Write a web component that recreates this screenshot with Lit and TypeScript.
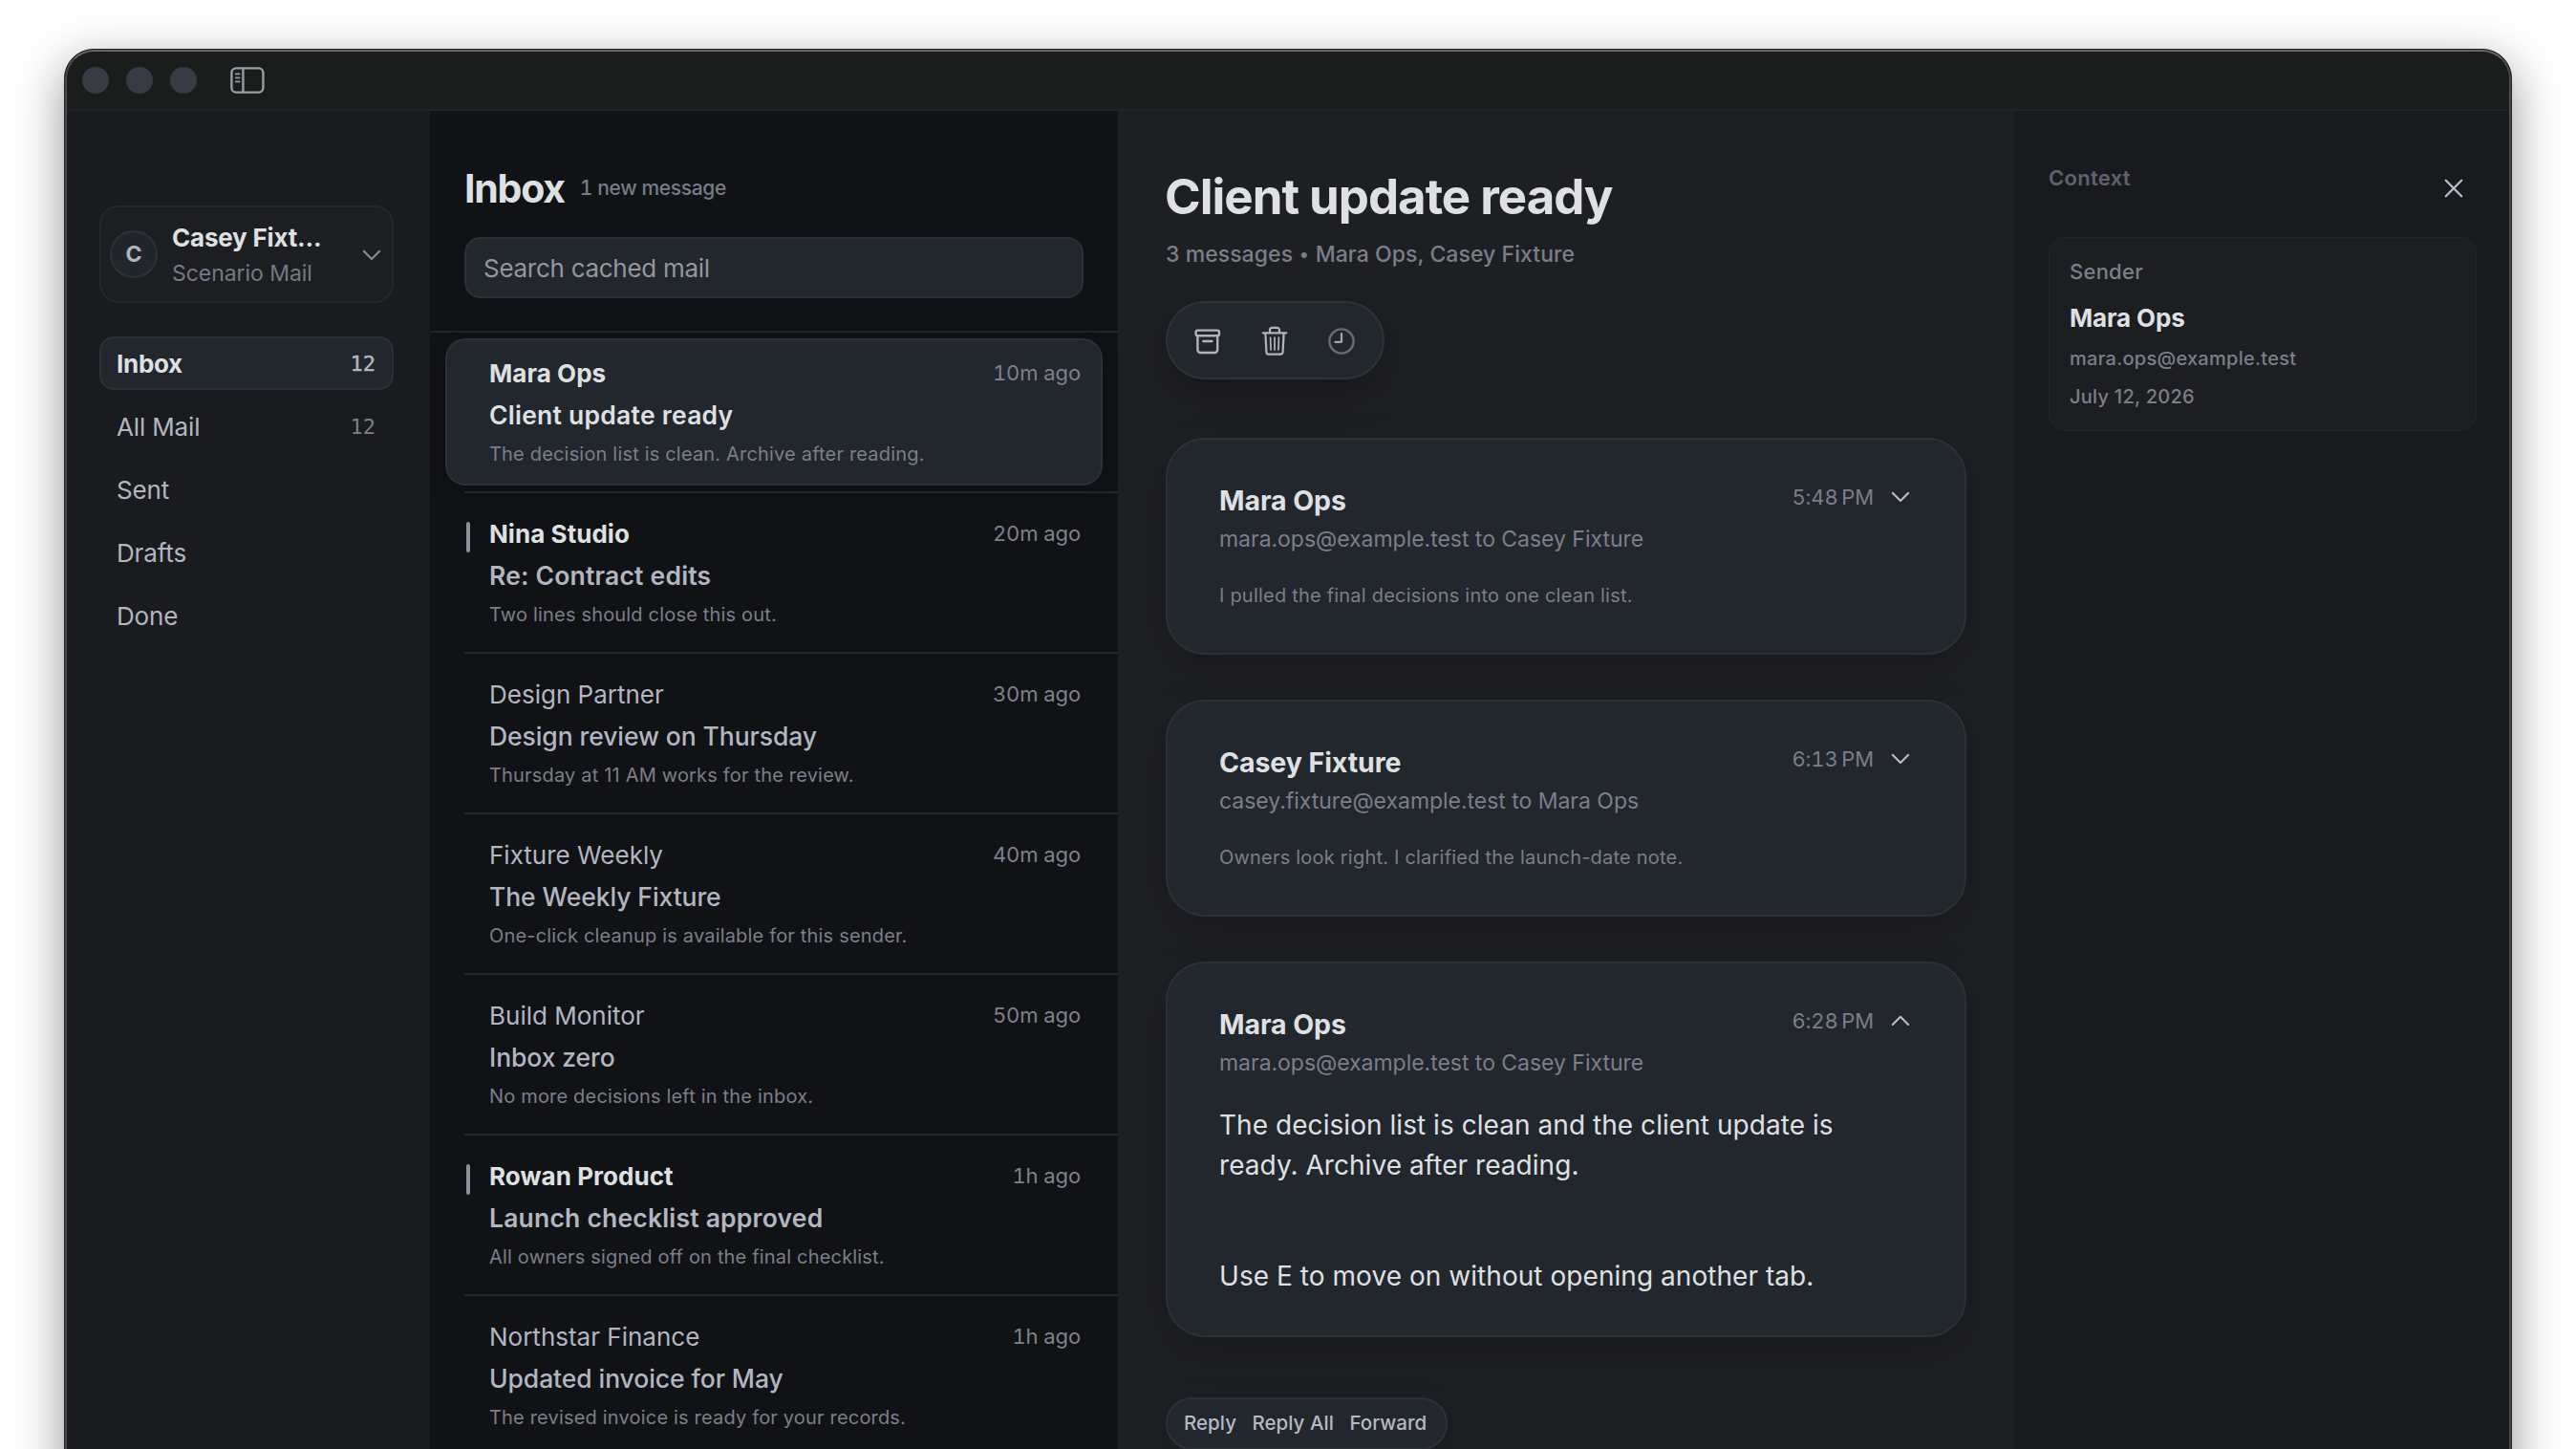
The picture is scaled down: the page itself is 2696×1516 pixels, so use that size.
import { LitElement, html, css, nothing } from "lit";
import { customElement, property } from "lit/decorators.js";
import { classMap } from "lit/directives/class-map.js";

interface Folder { name: string; count?: number; active?: boolean }
interface Mail { from: string; time: string; subject: string; snippet: string; state: "selected" | "unread" | "read" }
interface Message { from: string; route: string; time: string; preview?: string; body?: string[] }

const FOLDERS: Folder[] = [
  { name: "Inbox", count: 12, active: true },
  { name: "All Mail", count: 12 },
  { name: "Sent" },
  { name: "Drafts" },
  { name: "Done" },
];

const MAILS: Mail[] = [
  { from: "Mara Ops", time: "10m ago", subject: "Client update ready", snippet: "The decision list is clean. Archive after reading.", state: "selected" },
  { from: "Nina Studio", time: "20m ago", subject: "Re: Contract edits", snippet: "Two lines should close this out.", state: "unread" },
  { from: "Design Partner", time: "30m ago", subject: "Design review on Thursday", snippet: "Thursday at 11 AM works for the review.", state: "read" },
  { from: "Fixture Weekly", time: "40m ago", subject: "The Weekly Fixture", snippet: "One-click cleanup is available for this sender.", state: "read" },
  { from: "Build Monitor", time: "50m ago", subject: "Inbox zero", snippet: "No more decisions left in the inbox.", state: "read" },
  { from: "Rowan Product", time: "1h ago", subject: "Launch checklist approved", snippet: "All owners signed off on the final checklist.", state: "unread" },
  { from: "Northstar Finance", time: "1h ago", subject: "Updated invoice for May", snippet: "The revised invoice is ready for your records.", state: "read" },
];

const MESSAGES: Message[] = [
  { from: "Mara Ops", route: "mara.ops@example.test to Casey Fixture", time: "5:48\u202fPM", preview: "I pulled the final decisions into one clean list." },
  { from: "Casey Fixture", route: "casey.fixture@example.test to Mara Ops", time: "6:13\u202fPM", preview: "Owners look right. I clarified the launch-date note." },
  {
    from: "Mara Ops", route: "mara.ops@example.test to Casey Fixture", time: "6:28\u202fPM",
    body: ["The decision list is clean and the client update is ready. Archive after reading.", "Use E to move on without opening another tab."],
  },
];

const base = css`
  * { box-sizing: border-box; }
  :host {
    font-family: Inter, "Liberation Sans", sans-serif;
    color: #dfe0e2;
    white-space: nowrap;
  }
  svg { display: block; flex: none; fill: none; stroke: currentColor; stroke-linecap: round; stroke-linejoin: round; }
`;

const chevron = (up = false) => html`
  <svg width="20" height="12" viewBox="0 0 20 12" stroke-width="2.1">
    <path d=${up ? "M1.8 10 10 1.8 18.2 10" : "M1.8 1.8 10 10 18.2 1.8"} />
  </svg>`;

@customElement("mail-sidebar")
export class MailSidebar extends LitElement {
  static styles = [base, css`
    :host { display: flex; flex-direction: column; background: #1a1b1f; padding: 99px 38px 0 34px; }
    .account {
      display: flex; align-items: center; height: 102px; padding: 0 11px 0 9px;
      background: #1d1e22; border: 2px solid #22282b; border-radius: 20px; margin-bottom: 35px;
    }
    .avatar {
      width: 50px; height: 50px; border-radius: 50%; background: #21262d; border: 2px solid #2c3337;
      display: flex; align-items: center; justify-content: center;
      font-size: 23px; font-weight: 650; color: #b1b3be;
    }
    .who { flex: 1; padding: 3px 0 0 15px; }
    .name { font-size: 26px; font-weight: 650; line-height: 36px; letter-spacing: -0.2px; }
    .org { font-size: 23px; line-height: 38px; color: #747984; letter-spacing: -0.05px; }
    .caret { color: #878b95; margin-top: 2px; }
    .nav { display: flex; flex-direction: column; gap: 10px; }
    .item {
      display: flex; justify-content: space-between; align-items: center; height: 56px;
      padding: 0 17px 0 16px; border: 2px solid transparent; border-radius: 15px;
      font-size: 26px; color: #b3b6c0; letter-spacing: -0.15px;
    }
    .active { background: #22262d; border-color: #2a3237; color: #dfe0e2; font-weight: 650; letter-spacing: -0.3px; }
    .count { font: 22px "DejaVu Sans Mono", monospace; color: #7b7f89; letter-spacing: 0; }
    .active .count { color: #b3b6c0; -webkit-text-stroke: 0.4px #b3b6c0; }
  `];
  render() {
    return html`
      <div class="account">
        <div class="avatar">C</div>
        <div class="who"><div class="name">Casey Fixt...</div><div class="org">Scenario Mail</div></div>
        <div class="caret">${chevron()}</div>
      </div>
      <div class="nav">
        ${FOLDERS.map(f => html`
          <div class=${classMap({ item: true, active: !!f.active })}>
            <span>${f.name}</span>${f.count ? html`<span class="count">${f.count}</span>` : nothing}
          </div>`)}
      </div>`;
  }
}

@customElement("mail-list")
export class MailList extends LitElement {
  static styles = [base, css`
    :host { display: flex; flex-direction: column; background: #111216; overflow: hidden; }
    .head { height: 232px; flex: none; padding: 56px 36px 0; border-bottom: 2px solid #1f252a; }
    .title { display: flex; align-items: center; gap: 17px; height: 50px; margin-bottom: 26px; }
    .h { font-size: 41px; font-weight: 680; letter-spacing: -1.25px; line-height: 50px; }
    .new { font-size: 21px; font-weight: 550; color: #757c86; letter-spacing: -0.36px; line-height: 26px; font-variant-numeric: tabular-nums; margin-left: -1px; }
    .search {
      height: 64px; display: flex; align-items: center; padding-left: 18px;
      background: #22262d; border: 2px solid #2a3137; border-radius: 17px;
      font-size: 26px; color: #94979c; letter-spacing: -0.28px;
    }
    .row { flex: none; }
    .inner {
      display: grid; grid-template-columns: 44px 1fr; height: 154px; margin: 6px 16px;
      border: 2px solid transparent; border-radius: 21px;
    }
    .rule { height: 2px; margin-left: 36px; background: #20262b; }
    .bar { width: 4px; height: 32px; margin: 22px 0 0 20px; border-radius: 2px; background: transparent; }
    .text { padding: 13px 21px 0 0; }
    .top { display: flex; justify-content: space-between; height: 43px; }
    .from { font-size: 26px; line-height: 44px; color: #b3b6c0; }
    .time { font-size: 22px; line-height: 42px; color: #7d818b; font-variant-numeric: tabular-nums; letter-spacing: -0.1px; }
    .subject { font-size: 26.5px; line-height: 44px; font-weight: 500; color: #b3b6c0; letter-spacing: -0.08px; }
    .snippet { font-size: 20px; line-height: 39px; color: #7b7f89; letter-spacing: 0.18px; }
    .unread .bar { background: #8d909b; }
    .unread .from, .selected .from { font-weight: 650; color: #dfe0e2; letter-spacing: 0.05px; }
    .unread .subject { font-weight: 600; letter-spacing: 0.2px; }
    .selected .subject { font-weight: 600; color: #dfe0e2; letter-spacing: 0.25px; }
    .selected .inner { background: #22262d; border-color: #2a3137; box-shadow: 0 8px 20px rgba(0, 0, 0, 0.15); }
  `];
  render() {
    return html`
      <div class="head">
        <div class="title"><span class="h">Inbox</span><span class="new">1 new message</span></div>
        <div class="search">Search cached mail</div>
      </div>
      ${MAILS.map(m => html`
        <div class="row ${m.state}">
          <div class="inner">
            <div class="bar"></div>
            <div class="text">
              <div class="top"><span class="from">${m.from}</span><span class="time">${m.time}</span></div>
              <div class="subject">${m.subject}</div>
              <div class="snippet">${m.snippet}</div>
            </div>
          </div>
          <div class="rule"></div>
        </div>`)}`;
  }
}

@customElement("message-card")
export class MessageCard extends LitElement {
  @property({ attribute: false }) message!: Message;
  static styles = [base, css`
    :host {
      display: block; height: 227px; padding: 43.5px 57px 0 54px; background: #22262d;
      border: 2px solid #2a3137; border-radius: 41px; box-shadow: 0 14px 40px rgba(0, 0, 0, 0.18);
    }
    :host([open]) { height: 393px; }
    .top { display: flex; justify-content: space-between; height: 40px; }
    .from { font-size: 28.5px; font-weight: 650; line-height: 40px; letter-spacing: -0.08px; }
    .meta { display: flex; align-items: center; gap: 18px; height: 32px; font-size: 22px; color: #7b7e88; font-variant-numeric: tabular-nums; letter-spacing: -0.15px; }
    .meta svg { color: #b9bcc6; }
    .route { font-size: 23px; line-height: 41px; color: #7b7f89; letter-spacing: -0.03px; }
    .preview { font-size: 20px; line-height: 38px; margin-top: 19px; color: #7b7f89; letter-spacing: 0.21px; }
    .body { font-size: 28px; line-height: 42px; letter-spacing: 0.05px; margin-top: 23px; width: 680px; white-space: normal; }
    .para + .para { margin-top: 74px; }
  `];
  render() {
    const m = this.message;
    return html`
      <div class="top">
        <span class="from">${m.from}</span>
        <span class="meta"><span>${m.time}</span>${chevron(!!m.body)}</span>
      </div>
      <div class="route">${m.route}</div>
      ${m.preview ? html`<div class="preview">${m.preview}</div>` : nothing}
      ${m.body ? html`<div class="body">${m.body.map(p => html`<div class="para">${p}</div>`)}</div>` : nothing}`;
  }
}

@customElement("mail-reader")
export class MailReader extends LitElement {
  static styles = [base, css`
    :host { display: flex; flex-direction: column; background: #1e1f23; padding: 60px 50px 0; overflow: hidden; }
    .title { flex: none; font-size: 51px; font-weight: 680; line-height: 60px; letter-spacing: -1.02px; margin-left: -1px; }
    .sub { flex: none; font-size: 23px; font-weight: 500; line-height: 30px; margin-top: 15px; color: #7a7e88; letter-spacing: 0.06px; }
    .dot { font-size: 19px; margin: 0 0.5px; vertical-align: 1px; line-height: 1; }
    .tools {
      flex: none; align-self: flex-start; display: flex; align-items: center; gap: 42px; margin-top: 34px;
      width: 229px; height: 82px; padding: 2px 28px 0; background: #22262d; border: 2px solid #2d3439;
      border-radius: 41px; color: #b1b4bf; box-shadow: 0 14px 40px rgba(0, 0, 0, 0.22);
    }
    .later { color: #696c75; }
    .hands { color: #a3a6b0; stroke: #a3a6b0; }
    .cards { flex: none; display: flex; flex-direction: column; gap: 47px; margin-top: 61px; }
    .reply {
      flex: none; align-self: flex-start; display: flex; align-items: center; gap: 16.5px; height: 55px;
      margin-top: 63px; padding: 0 19.5px 2px 17px; background: #22262d; border: 2px solid #2c3338; border-radius: 28px;
      font-size: 20.5px; font-weight: 550; color: #b6b9c2; letter-spacing: 0.03px;
      box-shadow: 0 14px 40px rgba(0, 0, 0, 0.12);
    }
  `];
  render() {
    return html`
      <div class="title">Client update ready</div>
      <div class="sub">3 messages <span class="dot">•</span> Mara Ops, Casey Fixture</div>
      <div class="tools">
        <svg width="28" height="28" viewBox="0 0 28 28" stroke-width="2.4">
          <rect x="1.6" y="2.6" width="24.4" height="5.6" rx="1.8" />
          <path d="M3.4 8.4V23a3 3 0 0 0 3 3h14.8a3 3 0 0 0 3-3V8.4M9.4 14h9" />
        </svg>
        <svg width="28" height="32" viewBox="0 0 28 32" stroke-width="2.2">
          <path d="M1.8 7.4h24.4M9 7V4.2A2.4 2.4 0 0 1 11.4 1.8h5.2A2.4 2.4 0 0 1 19 4.2V7M4.4 7.6l1 19.6A2.4 2.4 0 0 0 7.8 29.6h12.4a2.4 2.4 0 0 0 2.4-2.4l1-19.6" />
          <path stroke-width="1.7" d="M9.6 12l.4 13M14 12v13M18.4 12 18 25" />
        </svg>
        <svg class="later" width="28" height="28" viewBox="0 0 28 28" stroke-width="2.4">
          <circle cx="14" cy="14" r="12.6" />
          <path class="hands" stroke-width="2.2" d="M14 6v8.8H7.4" />
        </svg>
      </div>
      <div class="cards">
        ${MESSAGES.map(m => html`<message-card .message=${m} ?open=${!!m.body}></message-card>`)}
      </div>
      <div class="reply"><span>Reply</span><span>Reply All</span><span>Forward</span></div>`;
  }
}

@customElement("mail-context")
export class MailContext extends LitElement {
  static styles = [base, css`
    :host { display: flex; flex-direction: column; background: #191a1e; padding: 56px 34px 0 36px; }
    .head { display: flex; justify-content: space-between; height: 76px; }
    .label { font-size: 22px; font-weight: 600; line-height: 28px; color: #60636b; letter-spacing: 0.3px; }
    .close { color: #b9bcc6; padding: 15px 14px 0 0; }
    .card { height: 203px; padding: 17px 21px; background: #1d1e22; border: 1px solid #222529; border-radius: 17px; }
    .sender { font-size: 22px; font-weight: 550; line-height: 36px; color: #7b7f89; letter-spacing: 0.25px; }
    .name { font-size: 26px; font-weight: 650; line-height: 44px; margin-top: 9px; letter-spacing: -0.15px; }
    .line { font-size: 20px; font-weight: 500; line-height: 40px; color: #7b7f89; letter-spacing: 0.26px; }
  `];
  render() {
    return html`
      <div class="head">
        <span class="label">Context</span>
        <span class="close"><svg width="20" height="20" viewBox="0 0 20 20" stroke-width="2.3"><path d="M1.8 1.8 18.2 18.2M18.2 1.8 1.8 18.2" /></svg></span>
      </div>
      <div class="card">
        <div class="sender">Sender</div>
        <div class="name">Mara Ops</div>
        <div class="line">mara.ops@example.test</div>
        <div class="line">July 12, 2026</div>
      </div>`;
  }
}

@customElement("app-root")
export class AppRoot extends LitElement {
  static styles = [base, css`
    :host { display: block; width: 2696px; height: 1516px; padding: 51px 67px 0; background: #fefefe; overflow: hidden; box-sizing: border-box; }
    .frame {
      height: 1600px; border: 1px solid #1b1d20; border-radius: 31px; overflow: hidden;
      box-shadow: 0 16px 50px rgba(0, 0, 0, 0.42); background: #1b1c1c;
    }
    .window {
      height: 100%; display: flex; flex-direction: column; border: 2px solid #484b52;
      border-top-color: #63666b; border-radius: 30px; overflow: hidden; background: #1b1c1c;
    }
    .bar { height: 62px; flex: none; display: flex; align-items: center; padding: 0 0 0 16px; border-bottom: 2px solid #202327; }
    .dot { width: 28px; height: 28px; margin-right: 18px; border-radius: 50%; background: #383b44; }
    .toggle { color: #9b9ca6; margin-left: 17px; }
    .panes { flex: 1; display: grid; grid-template-columns: 380px 720px 938px 1fr; }
  `];
  render() {
    return html`
      <div class="frame"><div class="window">
        <div class="bar">
          <span class="dot"></span><span class="dot"></span><span class="dot"></span>
          <svg class="toggle" width="36" height="28" viewBox="0 0 36 28" stroke-width="2.4">
            <rect x="1.4" y="1.4" width="33" height="25.2" rx="4.6" />
            <path d="M13.4 1.6v24.8" />
            <path stroke-width="1.7" d="M5.8 7.4h3.8M5.8 11.4h3.8M5.8 15.4h3.8" />
          </svg>
        </div>
        <div class="panes">
          <mail-sidebar></mail-sidebar>
          <mail-list></mail-list>
          <mail-reader></mail-reader>
          <mail-context></mail-context>
        </div>
      </div></div>`;
  }
}
